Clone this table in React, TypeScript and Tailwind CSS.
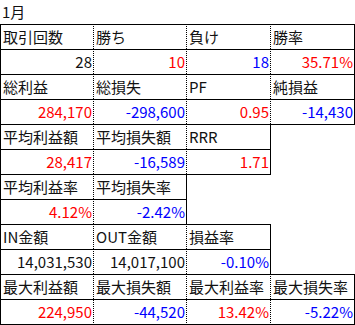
import React from "react";

type Cell = {
  t?: string;
  kind?: "label" | "num" | "empty";
  color?: "red" | "blue" | "black";
  right?: "dot" | "solid" | "none";
  top?: boolean;
};

const L = (t: string, right: "dot" | "solid"): Cell => ({ t, kind: "label", right, top: true });
const N = (t: string, color: "red" | "blue" | "black", right: "dot" | "solid"): Cell => ({
  t,
  kind: "num",
  color,
  right,
  top: true,
});
const E = (top: boolean): Cell => ({ kind: "empty", right: "none", top });

const rows: { cells: Cell[]; bottom?: boolean }[] = [
  { cells: [L("取引回数", "dot"), L("勝ち", "dot"), L("負け", "dot"), L("勝率", "solid")] },
  { cells: [N("28", "black", "dot"), N("10", "red", "dot"), N("18", "blue", "dot"), N("35.71%", "red", "solid")] },
  { cells: [L("総利益", "dot"), L("総損失", "dot"), L("PF", "dot"), L("純損益", "solid")] },
  { cells: [N("284,170", "red", "dot"), N("-298,600", "blue", "dot"), N("0.95", "red", "dot"), N("-14,430", "blue", "solid")] },
  { cells: [L("平均利益額", "dot"), L("平均損失額", "dot"), L("RRR", "solid"), E(true)] },
  { cells: [N("28,417", "red", "dot"), N("-16,589", "blue", "dot"), N("1.71", "red", "solid"), E(false)] },
  { cells: [L("平均利益率", "dot"), L("平均損失率", "solid"), E(true), E(false)] },
  { cells: [N("4.12%", "red", "dot"), N("-2.42%", "blue", "solid"), E(false), E(false)] },
  { cells: [L("IN金額", "dot"), L("OUT金額", "dot"), L("損益率", "solid"), E(false)] },
  { cells: [N("14,031,530", "black", "dot"), N("14,017,100", "black", "dot"), N("-0.10%", "blue", "solid"), E(false)] },
  { cells: [L("最大利益額", "dot"), L("最大損失額", "dot"), L("最大利益率", "dot"), L("最大損失率", "solid")] },
  {
    cells: [N("224,950", "red", "dot"), N("-44,520", "blue", "dot"), N("13.42%", "red", "dot"), N("-5.22%", "blue", "solid")],
    bottom: true,
  },
];

const colW = ["w-[94px]", "w-[93px]", "w-[84px]", "w-[84px]"];

export default function App() {
  return (
    <div className="w-[355px] h-[325px] bg-white text-[15px] leading-[24px] text-[#111] font-['Noto_Sans_CJK_JP','Noto_Sans',sans-serif]">
      <div className="h-[24px] pl-[2px] flex items-center">1月</div>
      {rows.map((r, ri) => (
        <div key={ri} className="flex">
          {r.cells.map((c, ci) => {
            const isEmpty = c.kind === "empty";
            const cls = [
              colW[ci],
              "h-[25px] flex items-center whitespace-nowrap overflow-hidden border-black",
              ci === 0 && !isEmpty ? "border-l" : "",
              c.top ? "border-t" : "pt-[1px]",
              r.bottom && !isEmpty ? "border-b h-[26px]" : "",
              c.right === "dot" ? "border-r [border-right-style:dotted]" : "",
              c.right === "solid" ? "border-r" : "",
              c.kind === "num" ? "justify-end pr-[1px]" : "pl-[2px]",
              c.color === "red" ? "text-[#ff0000]" : c.color === "blue" ? "text-[#0000ff]" : "",
            ].join(" ");
            return (
              <div key={ci} className={cls}>
                {c.t ?? ""}
              </div>
            );
          })}
        </div>
      ))}
    </div>
  );
}
